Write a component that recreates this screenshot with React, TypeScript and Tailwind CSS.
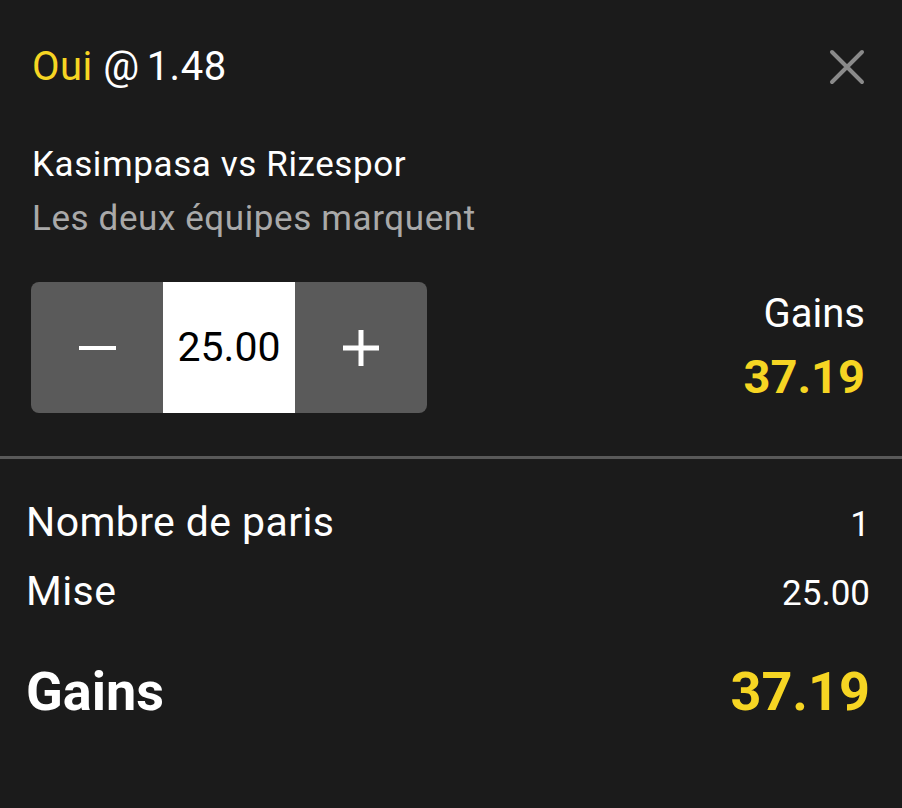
import { useState } from "react";

const YELLOW = "text-[#f6d523]";

export default function App() {
  const [stake, setStake] = useState(25);

  return (
    <div className="w-[902px] h-[808px] bg-[#1b1b1b] text-white font-['Roboto',sans-serif] overflow-hidden">
      {/* selection */}
      <section className="pl-8 pr-[37px] pt-[43px] pb-[43px]">
        <div className="flex items-center justify-between">
          <h1 className="text-[40px] leading-[48px] tracking-[0.5px]">
            <span className={YELLOW}>Oui</span> @<span className="ml-[7px]">1.48</span>
          </h1>
          <button className="w-[36px] h-[36px] text-[#8a8a8a]" aria-label="Fermer">
            <svg viewBox="0 0 36 36" className="w-full h-full" fill="none" stroke="currentColor" strokeWidth="4" strokeLinecap="round">
              <path d="M3 3 L33 33 M33 3 L3 33" />
            </svg>
          </button>
        </div>

        <div className="mt-[47px] text-[35px] leading-[54px] tracking-[0.6px]">
          <p>Kasimpasa vs Rizespor</p>
          <p className="text-[#a9a9a9]">Les deux équipes marquent</p>
        </div>

        <div className="mt-[36px] flex items-start justify-between">
          <div className="-ml-px flex w-[396px] h-[131px] rounded-lg overflow-hidden bg-[#5a5a5a]">
            <button
              className="w-[132px] flex items-center justify-center"
              onClick={() => setStake((s) => Math.max(0, s - 1))}
              aria-label="Moins"
            >
              <span className="block w-[37px] h-[4px] bg-white" />
            </button>
            <div className="w-[132px] bg-white text-black flex items-center justify-center text-[41px]">
              {stake.toFixed(2)}
            </div>
            <button
              className="w-[132px] flex items-center justify-center"
              onClick={() => setStake((s) => s + 1)}
              aria-label="Plus"
            >
              <svg viewBox="0 0 36 36" className="w-[36px] h-[36px]" fill="none" stroke="white" strokeWidth="5">
                <path d="M18 0 V36 M0 18 H36" />
              </svg>
            </button>
          </div>

          <div className="mt-2 text-right">
            <p className="text-[40px] leading-[48px]">Gains</p>
            <p className={`mt-[13px] text-[47px] leading-[52px] font-bold ${YELLOW}`}>37.19</p>
          </div>
        </div>
      </section>

      <div className="h-[3px] bg-[#595959]" />

      {/* summary */}
      <section className="pl-[26px] pr-8 pt-[30px]">
        <div className="flex items-baseline justify-between leading-[67px]">
          <span className="text-[41px] tracking-[0.4px]">Nombre de paris</span>
          <span className="text-[35px]">1</span>
        </div>
        <div className="flex items-baseline justify-between leading-[67px]">
          <span className="text-[41px] tracking-[0.4px]">Mise</span>
          <span className="text-[35px]">{stake.toFixed(2)}</span>
        </div>
        <div className="mt-[33px] flex items-baseline justify-between leading-[64px] font-bold">
          <span className="text-[54px]">Gains</span>
          <span className={`text-[54px] ${YELLOW}`}>37.19</span>
        </div>
      </section>
    </div>
  );
}
